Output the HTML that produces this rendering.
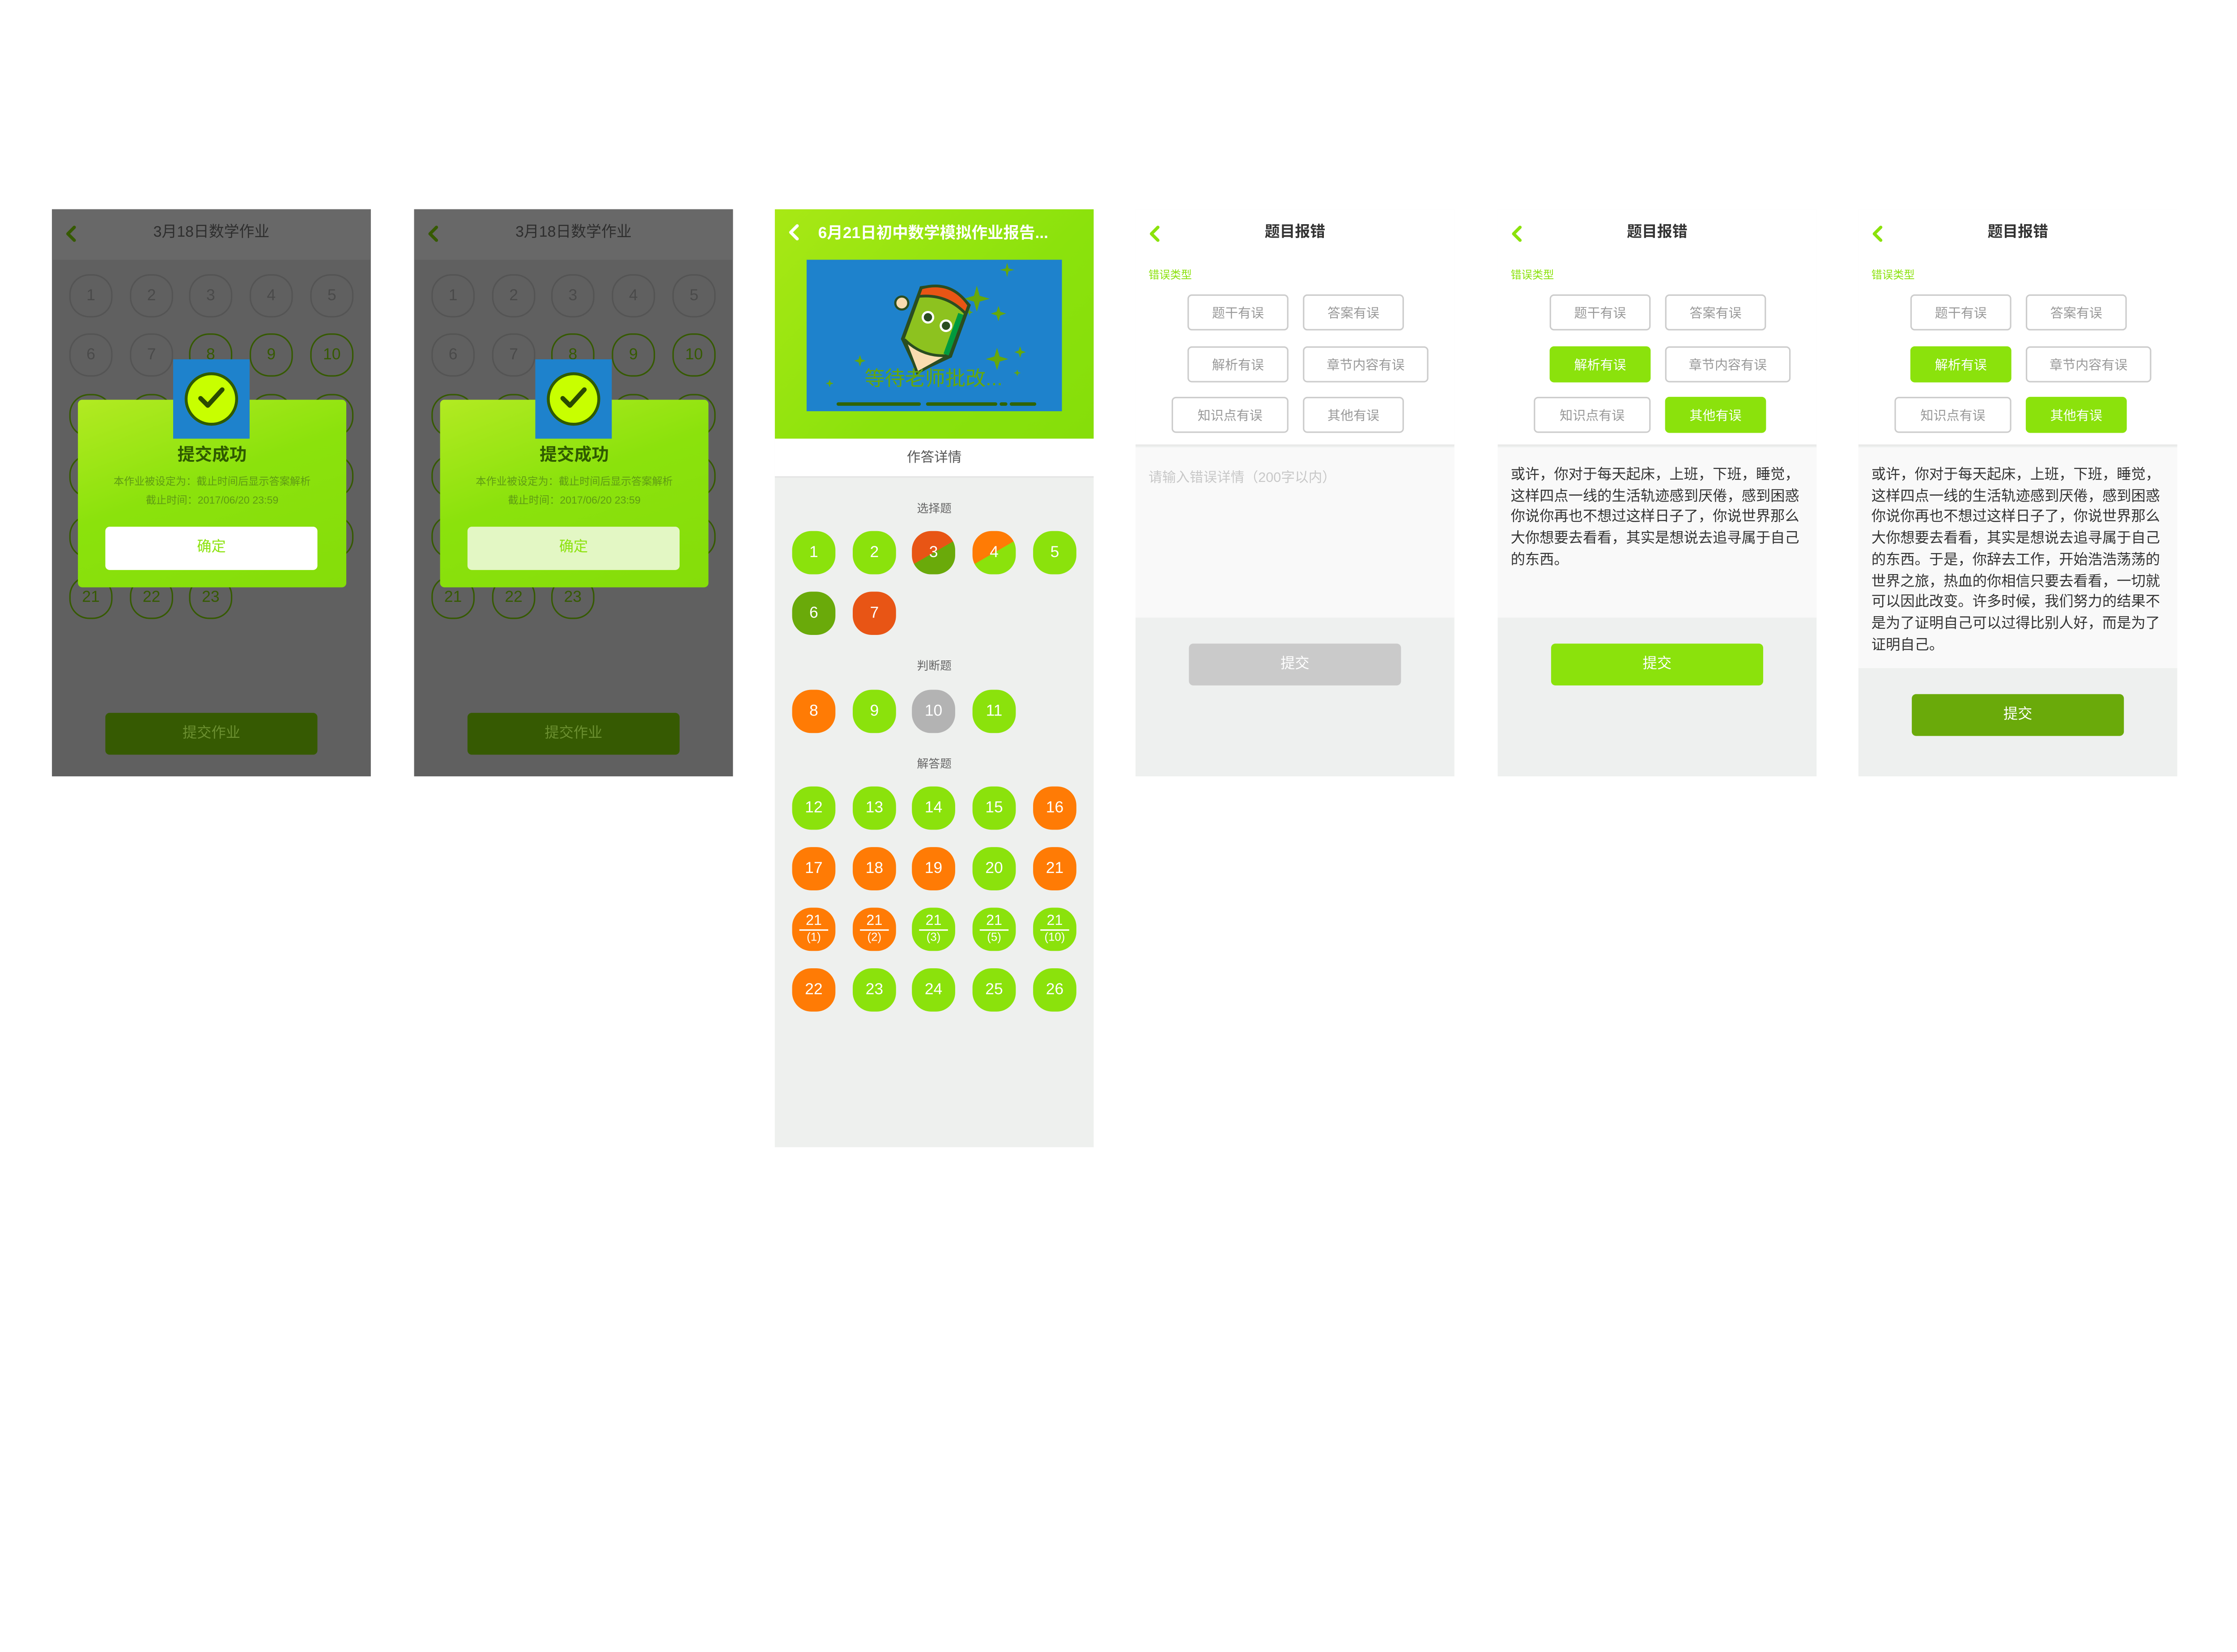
<!DOCTYPE html>
<html><head><meta charset="utf-8"><style>
*{margin:0;padding:0;box-sizing:border-box}
html,body{width:5322px;height:3692px;overflow:hidden;background:#fff}
#s{position:absolute;left:0;top:0;width:1553px;height:1078px;transform:scale(3.225);transform-origin:0 0;font-family:"Liberation Sans","Noto Sans CJK SC",sans-serif}
.p{position:absolute;top:145px;width:221px;overflow:hidden}
.a{position:absolute}
.c{position:absolute;width:30px;height:30px;border-radius:46%;display:flex;align-items:center;justify-content:center;font-size:11px}
.dg{border:1.8px solid #545454;color:#4a4a4a}
.dk{border:1.8px solid #365a02;color:#365a02}
.hd{position:absolute;left:0;top:0;width:221px;height:35px;text-align:center;line-height:33px;font-size:10.5px}
.chev{position:absolute;left:9px;top:11px;width:8px;height:12px}
.b{position:absolute;width:30px;height:30px;border-radius:44%;color:#fff;font-size:11px;display:flex;align-items:center;justify-content:center}
.G{background:#8be20c}.O{background:#ff7b05}.R{background:#e85515}.D{background:#6aaa0a}.Y{background:#b3b3b3}
.lbl{position:absolute;left:0;width:221px;text-align:center;font-size:8px;color:#666}
.tag{position:absolute;height:25px;border:1.5px solid #ccc;border-radius:3px;color:#999;font-size:9px;display:flex;align-items:center;justify-content:center;background:#fff}
.on{background:#8be20c;border-color:#8be20c;color:#fff}
.txt{position:absolute;left:9px;top:178px;font-size:10px;line-height:14.7px;color:#333;white-space:nowrap}
</style></head><body><div id="s">

<div class="p" style="left:36px;height:393px;background:#606060" id="p1"></div>
<div class="p" style="left:287px;height:393px;background:#606060" id="p2"></div>

<div class="p" style="left:537px;height:650px;background:#eef0ee">
 <div class="a" style="left:0;top:0;width:221px;height:159px;background:linear-gradient(135deg,#a8e815,#8be20c 60%,#86de0a)"></div>
 <svg class="chev" style="top:10px" viewBox="0 0 8 12"><path d="M6.5 1.5L2 6l4.5 4.5" stroke="#fff" stroke-width="2.2" fill="none" stroke-linecap="round" stroke-linejoin="round"/></svg>
 <div class="a" style="left:30px;top:8px;color:#fff;font-size:11px;font-weight:bold;white-space:nowrap">6月21日初中数学模拟作业报告...</div>
 <svg class="a" style="left:22px;top:35px" width="177" height="105" viewBox="0 0 177 105">
  <rect width="177" height="105" fill="#1e82cc"/>
  <g fill="#66a80a">
   <path d="M118 18l2 7 7 2-7 2-2 7-2-7-7-2 7-2z"/>
   <path d="M139 2l1 4 4 1-4 1-1 4-1-4-4-1 4-1z"/>
   <path d="M133 32l1.3 4 4 1.3-4 1.3-1.3 4-1.3-4-4-1.3 4-1.3z"/>
   <path d="M132 61l1.8 6 6 1.8-6 1.8-1.8 6-1.8-6-6-1.8 6-1.8z"/>
   <path d="M148 60l1 3 3 1-3 1-1 3-1-3-3-1 3-1z"/>
   <path d="M37 66l1 3 3 1-3 1-1 3-1-3-3-1 3-1z"/>
   <path d="M16 83l.7 2 2 .7-2 .7-.7 2-.7-2-2-.7 2-.7z"/>
   <path d="M113 34l.6 1.8 1.8.6-1.8.6-.6 1.8-.6-1.8-1.8-.6 1.8-.6z"/>
   <path d="M146 76l.6 1.8 1.8.6-1.8.6-.6 1.8-.6-1.8-1.8-.6 1.8-.6z"/>
  </g>
  <g transform="translate(90 42) scale(1.25) rotate(20) translate(-90 -42)">
   <path d="M76 28 Q90 20 104 28 L104 58 L90 72 L76 58 Z" fill="#8dc21f" stroke="#2a4d20" stroke-width="2"/>
   <path d="M76 28 Q90 18 104 28 L104 33 Q90 26 76 33 Z" fill="#e85515" stroke="#2a4d20" stroke-width="1.5"/>
   <path d="M77 58 Q90 64 103 58 L90 73 Z" fill="#f9dcb0" stroke="#2a4d20" stroke-width="1.5"/>
   <rect x="100" y="34" width="3" height="24" fill="#009a3e"/>
   <circle cx="85" cy="42" r="3.5" fill="#fff"/><circle cx="85" cy="42" r="2.3" fill="#2a4d20"/>
   <circle cx="96" cy="43" r="3.5" fill="#fff"/><circle cx="96" cy="43" r="2.3" fill="#2a4d20"/>
  </g>
  <circle cx="66" cy="30" r="4.5" fill="#f9dcb0" stroke="#2a4d20" stroke-width="1.5"/>
  <text x="88" y="87" text-anchor="middle" font-size="14" fill="#66a80a" font-family="Liberation Sans,Noto Sans CJK SC,sans-serif">等待老师批改...</text>
  <g stroke="#2f6305" stroke-width="2.4" stroke-linecap="round"><path d="M22 100h56M84 100h47M135 100h3M142 100h16"/></g>
 </svg>
 <div class="a" style="left:0;top:159px;width:221px;height:27px;background:#fff;text-align:center;line-height:27px;font-size:9.5px;color:#555;border-bottom:1px solid #e4e4e4">作答详情</div>
 <div class="lbl" style="top:202px">选择题</div>
 <div class="lbl" style="top:311px">判断题</div>
 <div class="lbl" style="top:379px">解答题</div>
 <div id="bb"></div>
</div>

<div id="p4"></div>
</div>
<script>
const X=[27,69,110,152,194];
function dlg(id,btnbg){
 const p=document.getElementById(id);let h='';
 h+='<div class="hd" style="background:#686868;color:#2e2e2e">3月18日数学作业</div>';
 h+='<svg class="chev" viewBox="0 0 8 12"><path d="M6.5 1.5L2 6l4.5 4.5" stroke="#365a02" stroke-width="2.2" fill="none" stroke-linecap="round" stroke-linejoin="round"/></svg>';
 const rows=[60,101,143,185,227,269];let n=1;
 for(let r=0;r<6;r++){for(let c=0;c<5;c++){if(r==5&&c>2)break;
  const cls=(n<=7)?'dg':'dk';const lab=r>=2&&r<5?'':n;
  h+=`<div class="c ${cls}" style="left:${X[c]-15}px;top:${rows[r]-15}px">${r==5?(21+c):lab}</div>`;n++;}}
 h+='<div class="a" style="left:18px;top:132px;width:186px;height:130px;border-radius:3px;background:linear-gradient(160deg,#b2ea22,#8be20c 45%,#85dd0a)"></div>';
 h+='<div class="a" style="left:84px;top:104px;width:53px;height:55px;background:#1e82cc"></div>';
 h+='<div class="a" style="left:92px;top:113px;width:37px;height:37px;border-radius:50%;background:#c8ff00;border:2px solid #2f5a00"></div>';
 h+='<svg class="a" style="left:100px;top:122px" width="21" height="18" viewBox="0 0 21 18"><path d="M3 9l5 5L18 3" stroke="#2a4a00" stroke-width="3.2" fill="none" stroke-linecap="round" stroke-linejoin="round"/></svg>';
 h+='<div class="a" style="left:18px;top:161px;width:186px;text-align:center;font-size:12px;font-weight:bold;color:#2f5a00">提交成功</div>';
 h+='<div class="a" style="left:18px;top:182px;width:186px;text-align:center;font-size:7.2px;line-height:13px;color:#5f9a14;white-space:nowrap">本作业被设定为：截止时间后显示答案解析<br>截止时间：2017/06/20 23:59</div>';
 h+=`<div class="a" style="left:37px;top:220px;width:147px;height:30px;border-radius:3px;background:${btnbg};text-align:center;line-height:30px;font-size:10px;color:#8be20c">确定</div>`;
 h+='<div class="a" style="left:37px;top:349px;width:147px;height:29px;border-radius:3px;background:#365a02;text-align:center;line-height:29px;font-size:10px;color:#6b8f30">提交作业</div>';
 p.innerHTML=h;}
dlg('p1','#fff');dlg('p2','#e3f7c4');
const bb=document.getElementById('bb');let h='';
function B(c,y,cls,t){h+=`<div class="b ${cls}" style="left:${X[c]-15}px;top:${y-15}px">${t}</div>`;}
function S(c,y,c1,c2,t){h+=`<div class="b" style="left:${X[c]-15}px;top:${y-15}px;background:linear-gradient(150deg,${c1} 50%,${c2} 50%)">${t}</div>`;}
B(0,238,'G',1);B(1,238,'G',2);S(2,238,'#e85515','#6aaa0a',3);S(3,238,'#ff7b05','#8be20c',4);B(4,238,'G',5);
B(0,280,'D',6);B(1,280,'R',7);
B(0,348,'O',8);B(1,348,'G',9);B(2,348,'Y',10);B(3,348,'G',11);
const r1=['G','G','G','G','O'],r2=['O','O','O','G','O'],r4=['O','G','G','G','G'];
for(let i=0;i<5;i++){B(i,415,r1[i],12+i);B(i,457,r2[i],17+i);B(i,541,r4[i],22+i);}
const r3=['O','O','G','G','G'],sub=['(1)','(2)','(3)','(5)','(10)'];
for(let i=0;i<5;i++){h+=`<div class="b ${r3[i]}" style="left:${X[i]-15}px;top:484px;flex-direction:column;line-height:8px"><span style="font-size:10px;border-bottom:.6px solid #fff;padding:0 4px 1px">21</span><span style="font-size:8px;margin-top:1px">${sub[i]}</span></div>`;}
bb.innerHTML=h;
const t5=['或许，你对于每天起床，上班，下班，睡觉，','这样四点一线的生活轨迹感到厌倦，感到困惑','你说你再也不想过这样日子了，你说世界那么','大你想要去看看，其实是想说去追寻属于自己'];
const t6=t5.concat(['的东西。于是，你辞去工作，开始浩浩荡荡的','世界之旅，热血的你相信只要去看看，一切就','可以因此改变。许多时候，我们努力的结果不','是为了证明自己可以过得比别人好，而是为了','证明自己。']);
const cfg=[[787,[],null,283,'#cacaca'],[1038,[2,5],t5.concat(['的东西。']),283,'#8be20c'],[1288,[2,5],t6,318,'#6aaa0a']];
let out='';
for(const [L,on,txt,taH,bc] of cfg){
 let q=`<div class="p" style="left:${L}px;height:393px;background:#eef0ef">`;
 q+='<div class="a" style="left:0;top:0;width:221px;height:164px;background:#fff;border-bottom:1px solid #e8e8e8"></div>';
 q+='<div class="hd" style="color:#333;font-weight:bold">题目报错</div>';
 q+='<svg class="chev" viewBox="0 0 8 12"><path d="M6.5 1.5L2 6l4.5 4.5" stroke="#8be20c" stroke-width="2.2" fill="none" stroke-linecap="round" stroke-linejoin="round"/></svg>';
 q+='<div class="a" style="left:9px;top:40px;font-size:7.5px;color:#8be20c">错误类型</div>';
 const tags=[['题干有误',36,59,70],['答案有误',116,59,70],['解析有误',36,95,70],['章节内容有误',116,95,87],['知识点有误',25,130,81],['其他有误',116,130,70]];
 tags.forEach((t,i)=>{q+=`<div class="tag${on.includes(i)?' on':''}" style="left:${t[1]}px;top:${t[2]}px;width:${t[3]}px">${t[0]}</div>`;});
 q+=`<div class="a" style="left:0;top:165px;width:221px;height:${taH-165}px;background:#f9f9f9"></div>`;
 if(txt) q+=`<div class="txt">${txt.join('<br>')}</div>`;
 else q+='<div class="a" style="left:9px;top:178px;font-size:9.5px;color:#c8c8c8">请输入错误详情（200字以内）</div>';
 const by=taH+18;
 q+=`<div class="a" style="left:37px;top:${by}px;width:147px;height:29px;border-radius:3px;background:${bc};color:#fff;font-size:10px;text-align:center;line-height:29px">提交</div>`;
 q+='</div>';out+=q;}
document.getElementById('p4').innerHTML=out;
</script>
</body></html>
